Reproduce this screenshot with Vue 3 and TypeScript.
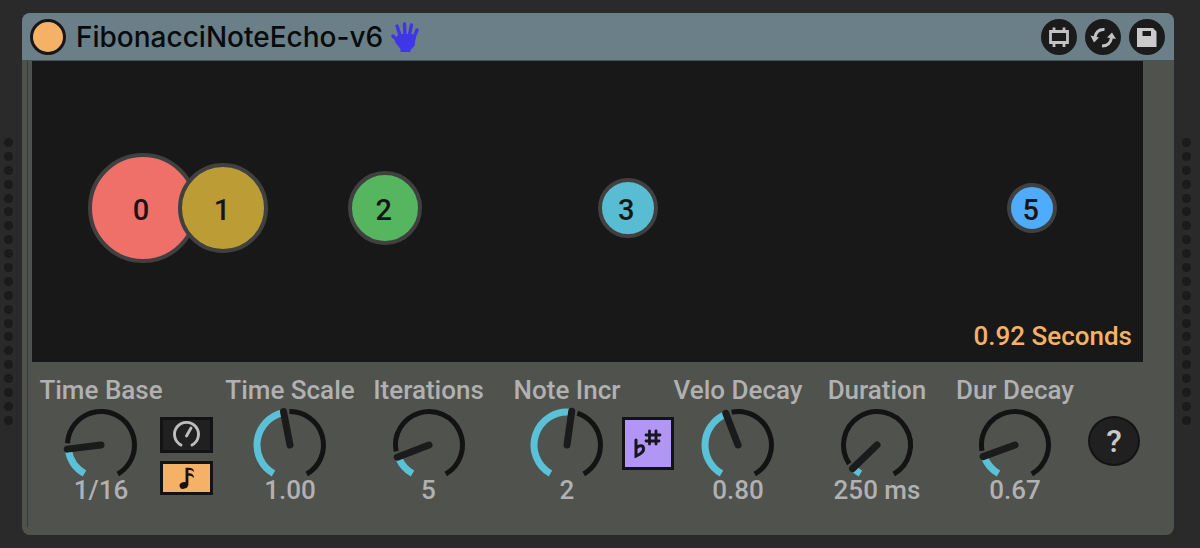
<script setup lang="ts">
import { computed, reactive, ref } from 'vue'

interface Knob {
  id: string
  label: string
  angle: number
  readout: string
  area: string
}

const SWEEP = 150
const GAP = 10
const CENTER = 40

const knobs = reactive<Knob[]>([
  { id: 'time-base', label: 'Time Base', angle: -97, readout: '1/16', area: 'tb' },
  { id: 'time-scale', label: 'Time Scale', angle: -11, readout: '1.00', area: 'ts' },
  { id: 'iterations', label: 'Iterations', angle: -111, readout: '5', area: 'it' },
  { id: 'note-incr', label: 'Note Incr', angle: 8, readout: '2', area: 'ni' },
  { id: 'velo-decay', label: 'Velo Decay', angle: -21, readout: '0.80', area: 'vd' },
  { id: 'duration', label: 'Duration', angle: -134, readout: '250 ms', area: 'du' },
  { id: 'dur-decay', label: 'Dur Decay', angle: -110, readout: '0.67', area: 'dd' },
])

function point(radius: number, deg: number): string {
  const rad = (deg * Math.PI) / 180
  return `${(CENTER + radius * Math.sin(rad)).toFixed(2)} ${(CENTER - radius * Math.cos(rad)).toFixed(2)}`
}

function arc(radius: number, from: number, to: number): string {
  if (to <= from) return ''
  return `M${point(radius, from)}A${radius} ${radius} 0 ${to - from > 180 ? 1 : 0} 1 ${point(radius, to)}`
}

const enabled = ref(true)
const timeMode = ref<'free' | 'sync'>('sync')

const STEP = 7.28
const ORIGIN = 9.95
const echoes = [
  { note: 0, offset: 0, size: 110, color: '#ee7068' },
  { note: 1, offset: 1, size: 90, color: '#bb9c35' },
  { note: 2, offset: 3, size: 74, color: '#55b65f' },
  { note: 3, offset: 6, size: 60, color: '#58bcd2' },
  { note: 5, offset: 11, size: 50, color: '#4fabfb' },
]
const bubbles = computed(() =>
  echoes.map((e) => ({
    ...e,
    style: {
      left: `${ORIGIN + e.offset * STEP}%`,
      width: `${e.size}px`,
      height: `${e.size}px`,
      backgroundColor: e.color,
    },
  })),
)
</script>

<template>
  <main class="rack">
    <div class="rail" aria-hidden="true"><i v-for="n in 21" :key="n" class="dot"></i></div>

    <section class="device">
      <header class="titlebar">
        <button class="power" :class="{ off: !enabled }" aria-label="Device on" :aria-pressed="enabled" @click="enabled = !enabled"></button>
        <h1 class="title">FibonacciNoteEcho-v6</h1>
        <svg class="hand" viewBox="0 0 28 32" aria-hidden="true">
          <g fill="none" stroke="#3f36e8" stroke-linecap="round" stroke-width="3.400">
            <path d="M8 21L2 15" />
            <path d="M10 17L6 5" />
            <path d="M14 16L13.500 3" />
            <path d="M18 16L20.500 4" />
            <path d="M22 19L26 9" />
          </g>
          <path d="M7.500 13H21L25 15L23.500 25L19.500 29V31H9.500V28L4 21L5 17Z" fill="#3f36e8" />
        </svg>
        <div class="tools">
          <button class="tool" aria-label="Edit device">
            <svg viewBox="0 0 36 36"><path d="M9.500 12.500H26.500V23.500H9.500ZM13 8.500V12M23 8.500V12M13 24V28M23 24V28" fill="none" stroke="#c2c2c2" stroke-width="2.800" /></svg>
          </button>
          <button class="tool" aria-label="Hot-swap">
            <svg viewBox="0 0 36 36">
              <path d="M19.500 10.500C14 10 11 13 10 18M17 27C22 27 25.500 24 26.500 19" fill="none" stroke="#c2c2c2" stroke-width="3" />
              <path d="M5.500 16.500L14 18.500L9 23.500ZM22 18.500L27 13.500L31 20Z" fill="#c2c2c2" />
            </svg>
          </button>
          <button class="tool" aria-label="Save preset">
            <svg viewBox="0 0 36 36"><path fill-rule="evenodd" d="M8 9H24L27.500 12.500V28H8ZM13.500 12V17H22V12Z" fill="#cacaca" /></svg>
          </button>
        </div>
      </header>

      <div class="body">
        <div class="display">
          <div v-for="b in bubbles" :key="b.note" class="bubble" :style="b.style">{{ b.note }}</div>
          <output class="elapsed">0.92 Seconds</output>
        </div>

        <div class="controls">
          <div v-for="k in knobs" :key="k.id" class="knob" :class="k.area">
            <label class="label" :for="k.id">{{ k.label }}</label>
            <div class="dial">
              <svg viewBox="0 0 80 80" aria-hidden="true">
                <path :d="arc(33.5, k.angle + GAP, SWEEP)" class="track" />
                <path :d="arc(33, -SWEEP, k.angle - 2)" class="fill" />
                <path :d="`M${CENTER} ${CENTER}L${point(34, k.angle)}`" class="needle" />
              </svg>
              <input :id="k.id" v-model.number="k.angle" class="range" type="range" :min="-SWEEP" :max="SWEEP" :aria-valuetext="k.readout" />
            </div>
            <output class="value" :for="k.id">{{ k.readout }}</output>
          </div>

          <div class="modes">
            <button class="mode" :class="{ on: timeMode === 'free' }" aria-label="Free time" @click="timeMode = 'free'">
              <svg viewBox="0 0 46 30">
                <path d="M17.500 25A12 12 0 1 1 28.500 25M23 16L27.500 8" fill="none" stroke="currentColor" stroke-width="2.900" stroke-linecap="round" />
              </svg>
            </button>
            <button class="mode" :class="{ on: timeMode === 'sync' }" aria-label="Synced time" @click="timeMode = 'sync'">
              <svg viewBox="0 0 46 30">
                <ellipse cx="20" cy="23" rx="4.500" ry="3.500" transform="rotate(-18 20 23)" fill="currentColor" />
                <path d="M22 23V4H25C29 4 31 5.500 31 8.500C29 6.500 27 6.500 25 6.500V10C28.500 10 31 11.500 31 15C29 12.500 27 12.500 25 12.500V23Z" fill="currentColor" />
              </svg>
            </button>
          </div>

          <button class="scale" aria-label="Use scale">
            <svg viewBox="0 0 46 46" fill="none" stroke="currentColor" stroke-linecap="round">
              <path d="M11 19V35C16 33 19 30 18.500 27C18 24 14 24 11 27.500" stroke-width="3" />
              <path d="M24.500 10V23M31 10V23M21 14H35M21 20H34" stroke-width="2.800" />
            </svg>
          </button>

          <button class="help" aria-label="Help">?</button>
        </div>
      </div>
    </section>

    <div class="rail" aria-hidden="true"><i v-for="n in 21" :key="n" class="dot"></i></div>
  </main>
</template>

<style>
body {
  margin: 0;
  background: #2a2a2a;
}
</style>

<style scoped>
* {
  box-sizing: border-box;
}
button {
  padding: 0;
  font: inherit;
  cursor: pointer;
}
svg {
  display: block;
}
.rack {
  display: flex;
  min-height: 100vh;
  padding: 13px 0;
  background: #2a2a2a;
  font-family: Roboto, "Liberation Sans", sans-serif;
  font-size: 26px;
  font-weight: 500;
  line-height: 30px;
}
.rail {
  display: flex;
  flex: none;
  flex-direction: column;
  justify-content: space-between;
  width: 9px;
  height: 287px;
  margin: 125px 8px 0 4px;
}
.device + .rail {
  margin: 125px 9px 0 8px;
}
.dot {
  width: 9px;
  height: 9px;
  border-radius: 50%;
  background: #1b1b1b;
}
.device {
  display: flex;
  flex: 1;
  flex-direction: column;
  margin-left: 1px;
  overflow: hidden;
  border-radius: 8px;
  background: #50524e;
}
.titlebar {
  display: flex;
  align-items: center;
  height: 48px;
  padding: 0 9px 0 8px;
  border-bottom: 1px solid #46545a;
  background: #6a7f88;
}
.power {
  width: 36px;
  height: 36px;
  border: 3px solid #171717;
  border-radius: 50%;
  background: #f5b266;
}
.power.off {
  background: #555;
}
.title {
  margin: 0 0 0 10px;
  color: #080b0c;
  font-family: Inter, Roboto, sans-serif;
  font-size: 28px;
  font-weight: 500;
}
.hand {
  width: 28px;
  height: 32px;
  margin-left: 8px;
}
.tools {
  display: flex;
  gap: 8px;
  margin-left: auto;
}
.tool {
  width: 36px;
  height: 36px;
  border: 0;
  border-radius: 50%;
  background: #1b1b1b;
}
.body {
  flex: 1;
  margin: 0 0 8px 5px;
  padding: 0 31px 0 4px;
  border-left: 1px solid #3a3b39;
}
.display {
  position: relative;
  height: 301px;
  background: #181818;
}
.bubble {
  position: absolute;
  top: 49%;
  display: flex;
  align-items: center;
  justify-content: center;
  padding: 3px 3px 0 0;
  transform: translate(-50%, -50%);
  border: 4px solid #404040;
  border-radius: 50%;
  color: #161616;
  font-size: 29px;
}
.elapsed {
  position: absolute;
  right: 11px;
  bottom: 11px;
  color: #f5b266;
}
.controls {
  display: grid;
  grid-template-columns:
    minmax(0, 118fr) minmax(0, 53fr) minmax(0, 154fr) minmax(0, 123fr) minmax(0, 22fr)
    minmax(0, 110fr) minmax(0, 52fr) minmax(0, 128fr) minmax(0, 150fr) minmax(0, 126fr) minmax(0, 72fr);
  margin: 13px -7px 0 10px;
}
.controls > * {
  grid-row: 1;
}
.tb { grid-column: 1; }
.modes { grid-column: 2; }
.ts { grid-column: 3; }
.it { grid-column: 4; }
.ni { grid-column: 6; }
.scale { grid-column: 7; }
.vd { grid-column: 8; }
.du { grid-column: 9; }
.dd { grid-column: 10; }
.help { grid-column: 11; }
.knob {
  display: flex;
  flex-direction: column;
  align-items: center;
  color: #b1b1b1;
  white-space: nowrap;
}
.dial {
  position: relative;
  width: 80px;
  height: 70px;
}
.dial svg {
  width: 80px;
  height: 80px;
}
.range {
  position: absolute;
  inset: 0;
  width: 100%;
  height: 100%;
  margin: 0;
  opacity: 0;
}
.track,
.fill,
.needle {
  fill: none;
}
.track {
  stroke: #131313;
  stroke-width: 5;
}
.fill {
  stroke: #5ac1d6;
  stroke-width: 7;
}
.needle {
  stroke: #1b1b1b;
  stroke-width: 7;
  stroke-linecap: round;
}
.modes {
  display: flex;
  flex-direction: column;
  gap: 8px;
  margin-top: 42px;
}
.mode {
  height: 36px;
  border: 3px solid #131313;
  background: #202020;
  color: #bdbdbd;
}
.mode + .mode {
  height: 34px;
}
.mode.on {
  background: #f5b266;
  color: #131313;
}
.mode svg {
  width: 100%;
  height: 100%;
}
.scale {
  height: 53px;
  margin-top: 42px;
  border: 3px solid #131313;
  background: #b196f5;
  color: #18151e;
}
.help {
  justify-self: center;
  width: 52px;
  height: 50px;
  margin-top: 41px;
  border: 2px solid #131313;
  border-radius: 50%;
  background: #202020;
  color: #c8c8c8;
  font-size: 32px;
}
</style>
